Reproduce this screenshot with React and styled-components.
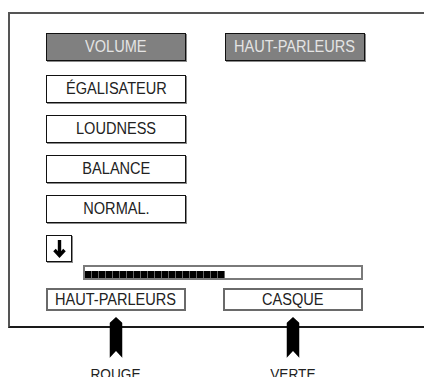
import React from "react";
import styled, { createGlobalStyle } from "styled-components";

const Global = createGlobalStyle`
  html, body { margin: 0; padding: 0; background: #fff; overflow: hidden; }
  body { font-family: "Liberation Sans", Arial, sans-serif; }
`;

const Page = styled.div`
  width: 424px;
  height: 377px;
  padding: 12px 0 0 8px;
  box-sizing: border-box;
  overflow: hidden;
`;

const Frame = styled.div`
  width: 440px;
  box-sizing: border-box;
  border-left: 2px solid #555;
  border-top: 2px solid #555;
  border-bottom: 2px solid #1a1a1a;
  padding: 19px 0 15px 36px;
  display: flex;
  flex-direction: column;
`;

const Menu = styled.div`
  display: flex;
  flex-direction: column;
  gap: 12px;
  align-items: flex-start;
`;

const TopRow = styled.div`
  display: flex;
  gap: 39px;
  margin-bottom: 2px;
`;

const Button = styled.div`
  box-sizing: border-box;
  width: 140px;
  height: ${(p) => (p.$small ? 23 : 28)}px;
  display: flex;
  align-items: center;
  justify-content: center;
  font-size: 16px;
  background: ${(p) => (p.$active ? "#808080" : "#fff")};
  color: ${(p) => (p.$active ? "#e4e4e4" : "#222")};
  border: ${(p) => (p.$small ? "2px solid #6a6a6a" : "1px solid #111")};
  box-shadow: ${(p) => (p.$small ? "none" : "1px 1px 0 #8a8a8a")};
`;

const Label = styled.span`
  display: inline-block;
  white-space: nowrap;
  transform: scaleX(0.91);
`;

const ArrowBox = styled.div`
  box-sizing: border-box;
  width: 26px;
  height: 27px;
  border: 1px solid #111;
  box-shadow: 1px 1px 0 #8a8a8a;
  display: flex;
  align-items: center;
  justify-content: center;
`;

const Bar = styled.div`
  box-sizing: border-box;
  margin: 3px 0 0 37px;
  width: 280px;
  height: 15px;
  border: 2px solid #7a7a7a;
  display: flex;
  align-items: flex-end;
`;

const Segment = styled.div`
  width: 6px;
  height: 7px;
  background: #000;
  border-right: 1px solid #666;
  flex: none;
`;

const BottomRow = styled.div`
  display: flex;
  gap: 37px;
  margin-top: 8px;
`;

const Legend = styled.div`
  display: grid;
  grid-template-columns: 140px 37px 140px;
  padding-left: 38px;
`;

const LegendItem = styled.div`
  grid-column: ${(p) => p.$col};
  position: relative;
  display: flex;
  justify-content: center;
  padding-top: 37px;
  font-size: 15px;
  line-height: 17px;
  color: #222;
`;

const Marker = styled.svg`
  position: absolute;
  top: -11px;
  left: 50%;
  transform: translateX(-50%);
`;

const MarkerShape = () => (
  <Marker width="13" height="41" viewBox="0 0 13 41">
    <polygon points="6.5,0 13,6 13,41 6.5,34 0,41 0,6" fill="#000" />
  </Marker>
);

const DownArrow = () => (
  <svg width="13" height="20" viewBox="0 0 13 20">
    <line x1="6.5" y1="1" x2="6.5" y2="16" stroke="#000" strokeWidth="3.4" />
    <polyline
      points="1.5,11 6.5,16.5 11.5,11"
      fill="none"
      stroke="#000"
      strokeWidth="3.4"
      strokeLinejoin="miter"
    />
  </svg>
);

const Btn = ({ children, ...rest }) => (
  <Button {...rest}>
    <Label>{children}</Label>
  </Button>
);

export default function App() {
  const segments = Array.from({ length: 20 });
  return (
    <>
      <Global />
      <Page>
        <Frame>
          <Menu>
            <TopRow>
              <Btn $active>VOLUME</Btn>
              <Btn $active>HAUT-PARLEURS</Btn>
            </TopRow>
            <Btn>ÉGALISATEUR</Btn>
            <Btn>LOUDNESS</Btn>
            <Btn>BALANCE</Btn>
            <Btn>NORMAL.</Btn>
            <ArrowBox>
              <DownArrow />
            </ArrowBox>
          </Menu>
          <Bar>
            {segments.map((_, i) => (
              <Segment key={i} />
            ))}
          </Bar>
          <BottomRow>
            <Btn $small>HAUT-PARLEURS</Btn>
            <Btn $small>CASQUE</Btn>
          </BottomRow>
        </Frame>
        <Legend>
          <LegendItem $col={1}>
            <MarkerShape />
            <Label>ROUGE</Label>
          </LegendItem>
          <LegendItem $col={3}>
            <MarkerShape />
            <Label>VERTE</Label>
          </LegendItem>
        </Legend>
      </Page>
    </>
  );
}
